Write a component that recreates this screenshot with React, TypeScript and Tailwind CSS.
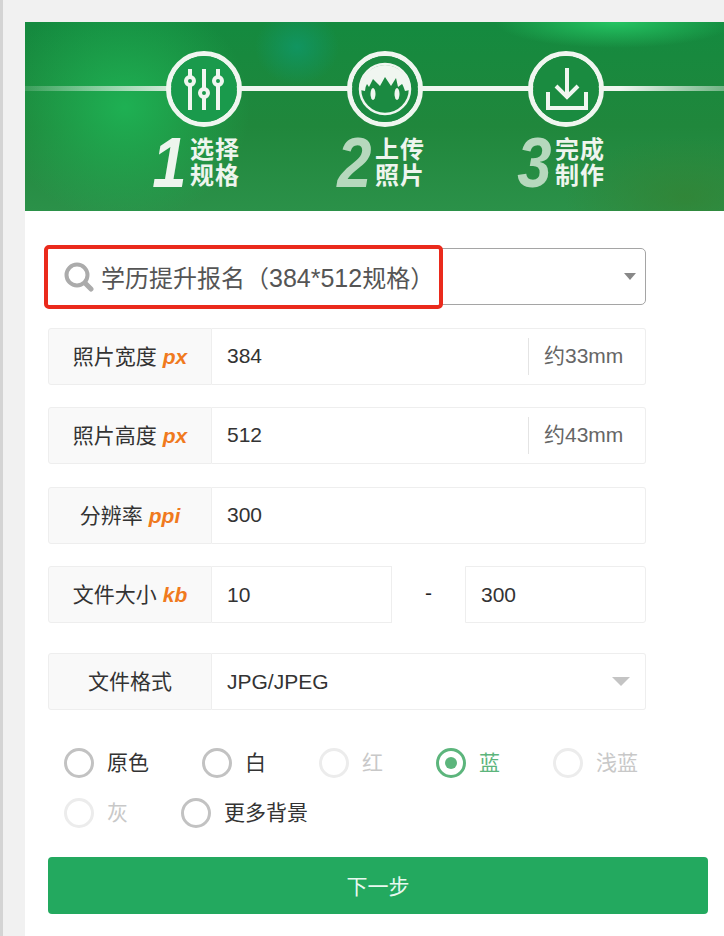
const font = "font-['Liberation_Sans','Noto_Sans_CJK_SC',sans-serif]";

function Step({ num, a, b, dim, numBox, children }: { num: string; a: string; b: string; dim?: boolean; numBox: string; children: React.ReactNode }) {
  return (
    <div className="relative flex w-[181px] flex-col items-center pt-[29px]">
      <div className="flex h-[76px] w-[76px] items-center justify-center rounded-full border-[5px] border-[#f0f6f0]">{children}</div>
      <div className="mt-[10px] flex items-center self-start">
        <span className={`origin-right scale-x-[0.88] pr-[4px] text-right text-[70px] leading-[52px] font-bold italic ${numBox} ${dim ? "text-[#b6d8bd]" : "text-[#eef5ee]"}`}>{num}</span>
        <div className="text-[24px] leading-[26px] font-bold tracking-[1px] text-[#eef5ee]">
          <div>{a}</div>
          <div>{b}</div>
        </div>
      </div>
    </div>
  );
}

function Row({ label, unit, children }: { label: string; unit?: string; children: React.ReactNode }) {
  return (
    <div className="flex h-[57px] items-stretch">
      <div className="flex w-[164px] shrink-0 items-center justify-center gap-[6px] rounded-l-[3px] border border-[#eeeeee] bg-[#f9f9f9] text-[21px] leading-[27px] text-[#333333]">
        <span>{label}</span>
        {unit && <span className="font-bold italic text-[#f07a1e]">{unit}</span>}
      </div>
      {children}
    </div>
  );
}

function Field({ value, suffix }: { value: string; suffix?: string }) {
  return (
    <div className="flex w-[434px] items-center rounded-r-[3px] border border-l-0 border-[#eeeeee] pb-[1px] pl-[15px] text-[21px] text-[#333333]">
      <span>{value}</span>
      {suffix && (
        <span className="ml-auto mr-[22px] flex h-[37px] w-[95px] items-center whitespace-nowrap border-l border-[#e4e4e4] pl-[15px] text-[#666666]">{suffix}</span>
      )}
    </div>
  );
}

function Radio({ label, state }: { label: string; state?: "off" | "on" }) {
  const ring = state === "off" ? "border-[#ececec]" : state === "on" ? "border-[#5cb57c]" : "border-[#c2c2c2]";
  const text = state === "off" ? "text-[#c8c8c8]" : state === "on" ? "text-[#5cb57c]" : "text-[#333333]";
  return (
    <div className="flex h-[50px] items-center gap-[13px]">
      <span className={`flex h-[30px] w-[30px] items-center justify-center rounded-full border-[3px] ${ring}`}>
        {state === "on" && <span className="h-[12px] w-[12px] rounded-full bg-[#5cb57c]" />}
      </span>
      <span className={`text-[21px] ${text}`}>{label}</span>
    </div>
  );
}

export default function App() {
  return (
    <div className={`flex h-[936px] w-[724px] overflow-hidden bg-[#f1f1f1] ${font}`}>
      <div className="w-[3px] shrink-0 bg-[#d4d4d4]" />
      <div className="flex flex-1 flex-col pl-[22px] pt-[22px]">
        <div
          className="relative flex h-[189px] shrink-0 pl-[88px]"
          style={{
            background:
              "radial-gradient(ellipse 42px 38px at 272px 25px, rgba(16,150,100,0.9), transparent), radial-gradient(ellipse 125px 115px at 100px 85px, rgba(30,178,84,0.95), transparent), radial-gradient(ellipse 120px 26px at 590px 0px, rgba(36,196,98,1), transparent), radial-gradient(ellipse 120px 60px at 660px 175px, rgba(52,130,50,0.7), transparent), linear-gradient(180deg, #148a3f 0%, #20873c 55%, #2b9149 100%)",
          }}
        >
          <div className="absolute left-0 right-0 top-[64px] h-[5px] bg-[linear-gradient(90deg,rgba(240,246,240,0.15),#f0f6f0_25%,#f0f6f0_85%,rgba(240,246,240,0.4))]" />
          <Step num="1" a="选择" b="规格" numBox="w-[77px]">
            <svg viewBox="0 0 66 66" width="66" height="66" fill="none" stroke="#f0f6f0" strokeWidth="4" className="relative rounded-full bg-[#1a9a4c]">
              <path d="M19 13v8M19 30v24M33 13v19M33 41v13M47 13v8M47 30v24" />
              <circle cx="19" cy="25" r="4" />
              <circle cx="33" cy="37" r="4" />
              <circle cx="47" cy="25" r="4" />
            </svg>
          </Step>
          <Step num="2" a="上传" b="照片" dim numBox="w-[81px]">
            <svg viewBox="0 0 66 66" width="66" height="66" className="relative rounded-full bg-[#1b8a41]">
              <circle cx="33" cy="33" r="25" fill="none" stroke="#f0f6f0" strokeWidth="2.5" />
              <path d="M8 34A25 25 0 0 1 58 34L53 35Q51 29 50 28L46 31L44 22L39 30L33 21L28 30L21 23L17 31L15 28Q13 31 13 35Z" fill="#f0f6f0" />
              <ellipse cx="21" cy="38" rx="2.5" ry="6" fill="#f0f6f0" />
              <ellipse cx="45" cy="38" rx="2.5" ry="6" fill="#f0f6f0" />
            </svg>
          </Step>
          <Step num="3" a="完成" b="制作" dim numBox="w-[80px]">
            <svg viewBox="0 0 66 66" width="66" height="66" fill="none" stroke="#f0f6f0" strokeWidth="4" className="relative rounded-full bg-[#1a8b40]">
              <path d="M34 12v29M23 30l11 11 11-11M15 36v16h38V36" />
            </svg>
          </Step>
        </div>

        <div className="relative flex-1 bg-white pl-[23px] pr-[16px] pt-[37px] text-[#333333]">
          <div className="flex h-[57px] w-[598px] items-center justify-end rounded-[5px] border border-[#a5a5a5] pr-[9px]">
            <span className="border-x-[6px] border-t-[7px] border-x-transparent border-t-[#888888]" />
          </div>
          <div className="absolute left-[19px] top-[34px] flex h-[64px] w-[399px] items-center rounded-[5px] border-[4px] border-[#ea2a1c] bg-white pl-[16px] text-[24px] text-[#555555]">
            <svg viewBox="0 0 30 30" width="30" height="30" fill="none" className="shrink-0">
              <circle cx="13" cy="13" r="10.5" stroke="#ababab" strokeWidth="4" />
              <path d="M21 21l6 6" stroke="#ababab" strokeWidth="5" strokeLinecap="round" />
            </svg>
            <span className="ml-[7px] whitespace-nowrap pt-[3px]">学历提升报名（<span className="text-[25px]">384*512</span>规格）</span>
          </div>

          <div className="mt-[23px] flex w-[598px] flex-col">
            <Row label="照片宽度" unit="px"><Field value="384" suffix="约33mm" /></Row>
            <div className="mt-[22px]"><Row label="照片高度" unit="px"><Field value="512" suffix="约43mm" /></Row></div>
            <div className="mt-[23px]"><Row label="分辨率" unit="ppi"><Field value="300" /></Row></div>
            <div className="mt-[22px]">
              <Row label="文件大小" unit="kb">
                <div className="flex w-[180px] items-center border border-l-0 border-[#eeeeee] pl-[15px] text-[21px]">10</div>
                <div className="flex w-[73px] items-center justify-center pb-[3px] text-[21px] text-[#222222]">-</div>
                <div className="flex w-[181px] items-center rounded-r-[3px] border border-[#eeeeee] pl-[15px] text-[21px]">300</div>
              </Row>
            </div>
            <div className="mt-[30px]">
              <Row label="文件格式">
                <div className="flex w-[434px] items-center justify-between rounded-r-[3px] border border-l-0 border-[#eeeeee] pl-[15px] pr-[15px] text-[21px]">
                  <span>JPG/JPEG</span>
                  <span className="border-x-[9px] border-t-[9px] border-x-transparent border-t-[#c4c4c4]" />
                </div>
              </Row>
            </div>
          </div>

          <div className="mt-[28px] flex w-[620px] flex-wrap gap-x-[53px] pl-[16px]">
            <Radio label="原色" />
            <Radio label="白" />
            <Radio label="红" state="off" />
            <Radio label="蓝" state="on" />
            <Radio label="浅蓝" state="off" />
            <Radio label="灰" state="off" />
            <Radio label="更多背景" />
          </div>

          <div className="mt-[19px] flex h-[57px] w-[660px] items-center justify-center rounded-[4px] bg-[#23a95f] pt-[2px] text-[21px] text-[#e8f8ef]">下一步</div>
        </div>
      </div>
    </div>
  );
}
